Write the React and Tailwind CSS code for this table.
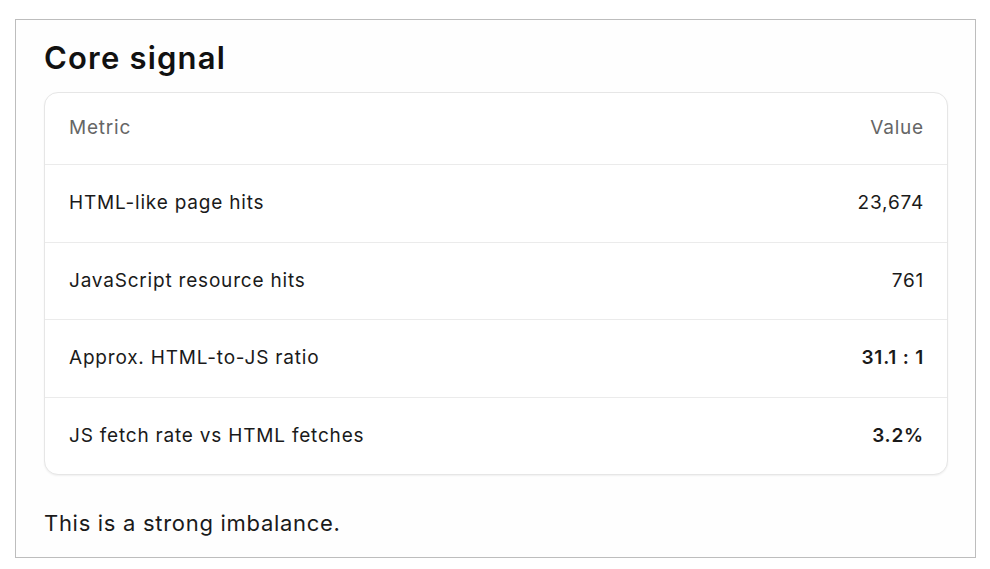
const rows = [
  { label: 'HTML-like page hits', value: '23,674', bold: false },
  { label: 'JavaScript resource hits', value: '761', bold: false },
  { label: 'Approx. HTML-to-JS ratio', value: '31.1 : 1', bold: true },
  { label: 'JS fetch rate vs HTML fetches', value: '3.2%', bold: true },
];

const App = () => {
  return (
    <div className="w-[990px] h-[569px] bg-white pt-[19px] pl-[15px] font-['Inter',sans-serif] text-[#1a1a1a]">
      <div className="w-[961px] h-[539px] border border-[#bdbdbd] bg-[#fefefe] px-[28px] pt-[18px]">
        <h1 className="text-[31px] leading-[40px] font-semibold tracking-[1.2px] text-[#111]">Core signal</h1>
        <div className="mt-[14px] w-[904px] rounded-[14px] border border-[#e6e6e6] bg-white shadow-[0_1px_2px_rgba(0,0,0,0.06)]">
          <div className="flex justify-between items-center h-[71px] pl-[24px] pr-[23px] text-[19px] tracking-[0.8px] text-[#666]">
            <span>Metric</span>
            <span>Value</span>
          </div>
          {rows.map((r) => (
            <div
              key={r.label}
              className="flex justify-between items-center h-[77.5px] pl-[24px] pr-[23px] border-t border-[#ebebeb] text-[19px] tracking-[0.8px]"
            >
              <span>{r.label}</span>
              <span className={r.bold ? 'font-semibold' : ''}>{r.value}</span>
            </div>
          ))}
        </div>
        <p className="mt-[34px] text-[22px] leading-[28px] tracking-[0.7px] text-[#1a1a1a]">This is a strong imbalance.</p>
      </div>
    </div>
  );
};

export default App;
